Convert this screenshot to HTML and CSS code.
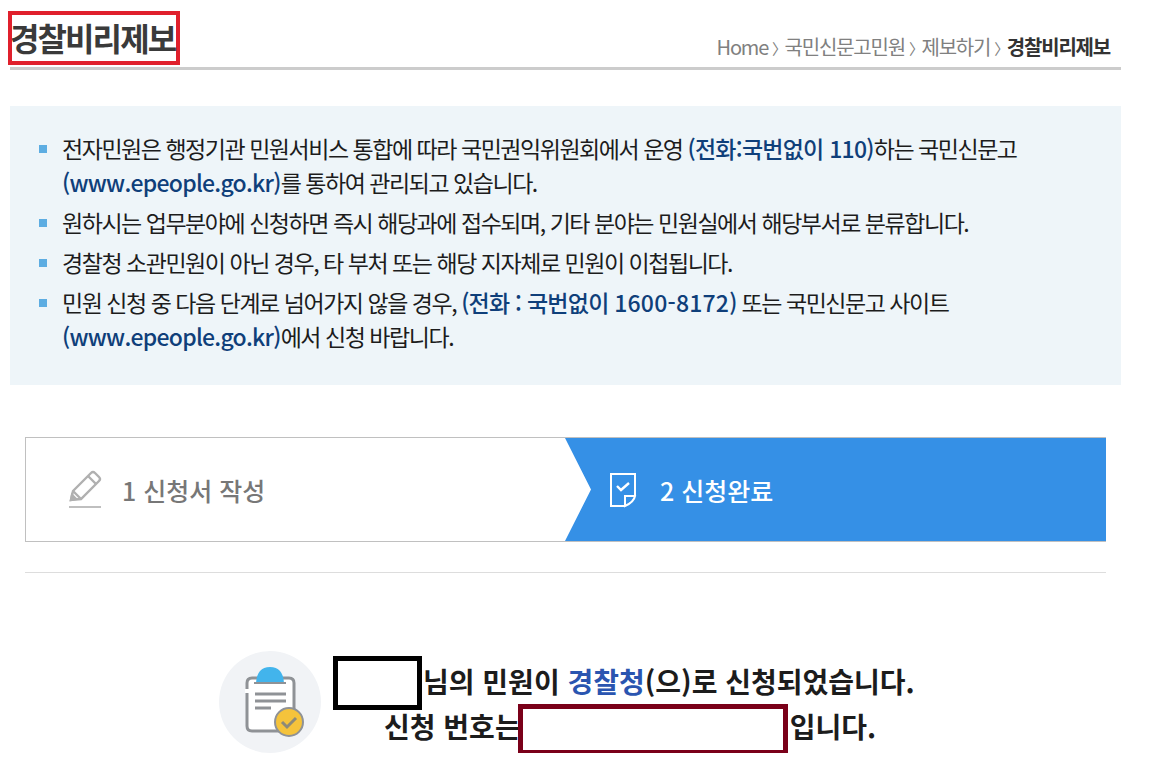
FILE: index.html
```html
<!DOCTYPE html>
<html lang="ko">
<head>
  <meta charset="UTF-8">
  <meta name="viewport" content="width=device-width, initial-scale=1.0">
  <title>경찰비리제보</title>
  <link rel="stylesheet" href="styles.css">
</head>
<body>

<div class="container">
  <div class="page-head">
    <h1>경찰비리제보</h1>
    <div class="breadcrumb">Home<span class="sep">〉</span>국민신문고민원<span class="sep">〉</span>제보하기<span class="sep">〉</span><strong>경찰비리제보</strong></div>
  </div>

  <ul class="info-box">
    <li>전자민원은 행정기관 민원서비스 통합에 따라 국민권익위원회에서 운영 <b>(전화:국번없이 110)</b>하는 국민신문고<br><b>(www.epeople.go.kr)</b>를 통하여 관리되고 있습니다.</li>
    <li>원하시는 업무분야에 신청하면 즉시 해당과에 접수되며, 기타 분야는 민원실에서 해당부서로 분류합니다.</li>
    <li>경찰청 소관민원이 아닌 경우, 타 부처 또는 해당 지자체로 민원이 이첩됩니다.</li>
    <li>민원 신청 중 다음 단계로 넘어가지 않을 경우, <b>(전화 : 국번없이 <span class="tel">1600-8172</span>)</b> 또는 국민신문고 사이트<br><b>(www.epeople.go.kr)</b>에서 신청 바랍니다.</li>
  </ul>

  <div class="steps">
    <div class="step">
      <svg width="34" height="40" viewBox="0 0 34 40" fill="none" stroke="#b0b0b0" stroke-width="2.4">
        <path d="M3 30 L5 21 L23 3 Q25 1 27 3 L31 7 Q33 9 31 11 L13 29 L3 30 Z"/>
        <path d="M20 6 L28 14 M5 21 L13 29"/>
        <path d="M3 30 L4 25 L8 29 Z" fill="#b0b0b0"/>
        <path d="M1 37 H33" stroke-width="1.6"/>
      </svg>
      <span>1 신청서 작성</span>
    </div>
    <div class="step active">
      <svg width="28" height="36" viewBox="0 0 28 36" fill="none" stroke="#fff" stroke-width="2">
        <path d="M16 34 H2 V2 H26 V24"/>
        <path d="M16 34 V24 H26 Q25 30 16 34 Z"/>
        <path d="M8 14 L12 18 L20 11" stroke-width="2.4"/>
      </svg>
      <span>2 신청완료</span>
    </div>
  </div>

  <div class="divider"></div>

  <div class="result">
    <svg class="result-icon" width="102" height="102" viewBox="0 0 102 102">
      <circle cx="51" cy="51" r="51" fill="#f1f3f6"/>
      <path d="M33 27 Q28 27 28 32 V75 Q28 80 33 80 H70 Q75 80 75 75 V32 Q75 27 70 27 Z" fill="#fff" stroke="#8f9296" stroke-width="3"/>
      <path d="M28 38 V42" stroke="#fff" stroke-width="4"/>
      <path d="M37 32 Q38 16 51 16 Q64 16 65 32 Z" fill="#42b4ec"/>
      <path d="M35 32 H67" stroke="#8f9296" stroke-width="2"/>
      <path d="M36 43 H67 M36 50 H67 M36 57 H52" stroke="#8f9296" stroke-width="3"/>
      <circle cx="70" cy="71" r="14" fill="#f5c33b" stroke="#8f9296" stroke-width="2"/>
      <path d="M63 71 L68 76 L77 67" fill="none" stroke="#8d8a78" stroke-width="3"/>
    </svg>
    <div class="result-text">
      <p><span class="mask mask-name"></span>님의 민원이 <em>경찰청</em>(으)로 신청되었습니다.</p>
      <p>신청 번호는<span class="mask mask-number"></span>입니다.</p>
    </div>
  </div>
</div>

</body>
</html>
```

FILE: styles.css
```css
* {
  margin: 0;
  padding: 0;
  box-sizing: border-box;
  font-family: "Noto Sans CJK KR", "Noto Sans", sans-serif;
}

body {
  background: #fff;
  color: #222;
  overflow: hidden;
}

.container {
  width: 1111px;
  margin-left: 10px;
}

.page-head {
  display: flex;
  justify-content: space-between;
  align-items: flex-end;
  height: 70px;
  padding-top: 11px;
  border-bottom: 3px solid #ccc;
}

h1 {
  width: 172px;
  height: 54px;
  margin: 0 0 2px -2px;
  border: 4px solid #e0202c;
  font-size: 32px;
  line-height: 44px;
  letter-spacing: -1.9px;
  text-indent: -2px;
  color: #3a3a3a;
  white-space: nowrap;
}

.breadcrumb {
  padding: 0 11px 4px 0;
  font-size: 20px;
  line-height: 28px;
  letter-spacing: -1.2px;
  color: #808080;
}

.breadcrumb .sep {
  display: inline-block;
  padding-left: 4px;
  font-size: 15px;
  letter-spacing: -2.5px;
}

.breadcrumb strong {
  color: #333;
}

.info-box {
  height: 279px;
  margin-top: 36px;
  padding: 25px 20px 0 52px;
  background-color: #eef5f9;
  list-style: none;
}

.info-box li {
  position: relative;
  margin-bottom: 6px;
  font-size: 23px;
  line-height: 34px;
  letter-spacing: -1.47px;
  color: #1c1c1c;
  white-space: nowrap;
}

.info-box li::before {
  content: "";
  position: absolute;
  left: -23px;
  top: 14px;
  width: 8px;
  height: 8px;
  background-color: #5dade2;
}

.info-box b {
  font-weight: 500;
  letter-spacing: -0.75px;
  color: #0f3f7a;
}

.info-box .tel {
  letter-spacing: 0.2px;
}

.steps {
  display: flex;
  width: 1081px;
  height: 105px;
  margin: 52px 0 0 15px;
  border: 1px solid #c0c0c0;
}

.step {
  display: flex;
  align-items: center;
  width: 539px;
  padding-left: 42px;
  gap: 20px;
  font-size: 25px;
  font-weight: 500;
  color: #777;
}

.step.active {
  flex: 1;
  margin: 0 -1px 0 0;
  padding-left: 44px;
  gap: 23px;
  color: #fff;
  background-color: #3590e6;
  clip-path: polygon(0 0, 100% 0, 100% 100%, 0 100%, 26px 50%);
}

.divider {
  width: 1081px;
  margin: 30px 0 0 15px;
  border-top: 1px solid #ddd;
}

.result {
  display: flex;
  align-items: flex-start;
  margin: 78px 0 0 209px;
  gap: 12px;
}

.result-text {
  width: 600px;
  padding-top: 8px;
  font-size: 28px;
  font-weight: 700;
  line-height: 45px;
  color: #1c1c1c;
}

.result-text p {
  white-space: nowrap;
}

.result-text p + p {
  padding-left: 51px;
}

.result-text em {
  font-style: normal;
  color: #2a55b0;
}

/* empty inline-blocks sit on the baseline, negative margins keep the line at 45px */
.mask {
  display: inline-block;
}

.mask-name {
  width: 89px;
  height: 54px;
  margin-top: -10px;
  margin-right: 1px;
  margin-bottom: -17px;
  border: 5px solid #000;
}

.mask-number {
  width: 270px;
  height: 51px;
  margin-top: -9px;
  margin-left: -3px;
  margin-right: 2px;
  margin-bottom: -17px;
  border: 5px solid #7a0019;
}
```
